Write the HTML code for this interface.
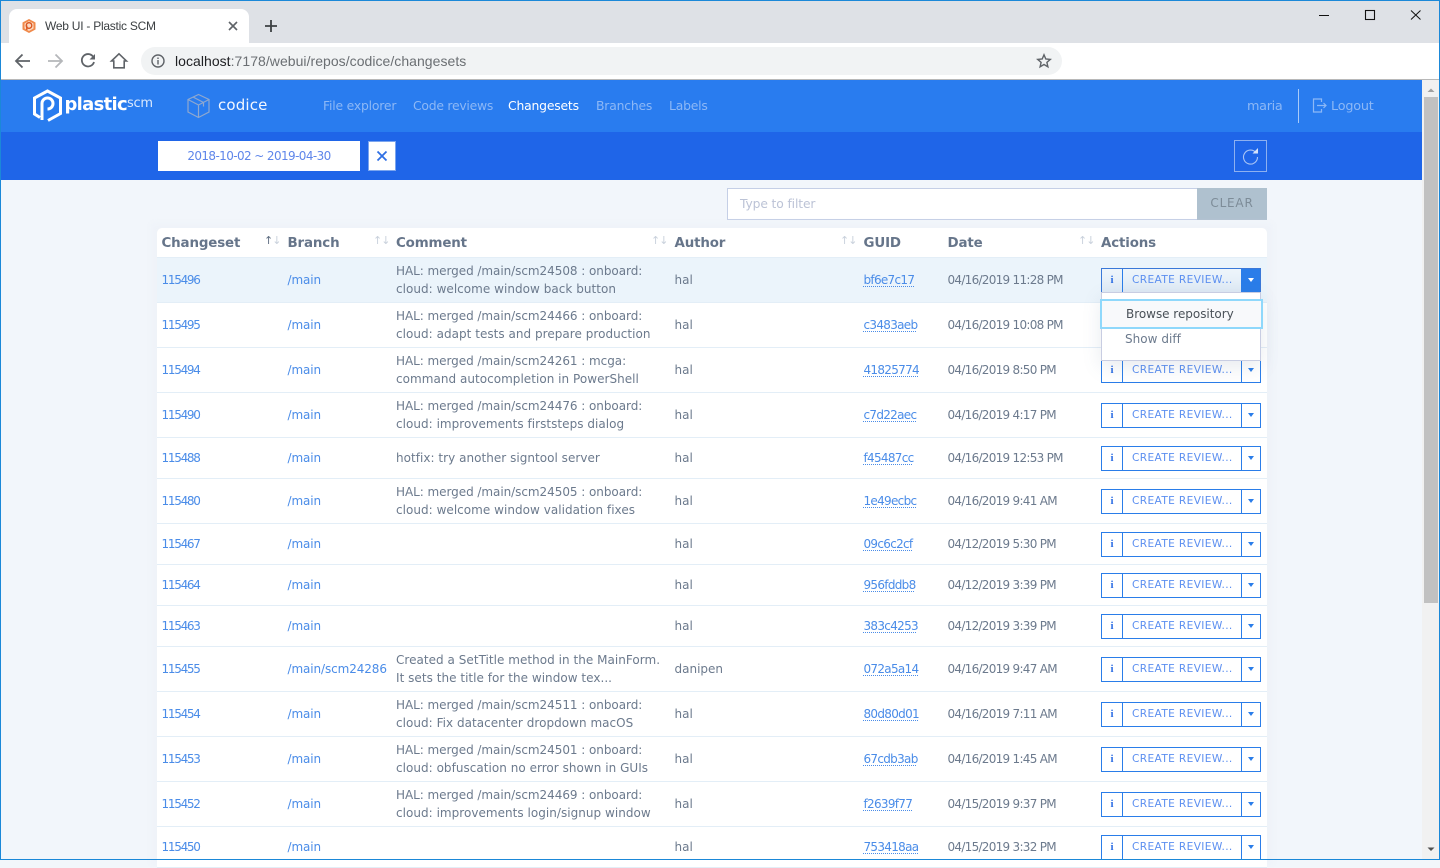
<!DOCTYPE html>
<html><head><meta charset="utf-8"><title>Web UI - Plastic SCM</title>
<style>
*{box-sizing:border-box}
html,body{margin:0;padding:0;width:1440px;height:860px;overflow:hidden;background:#f2f6fb;font-family:"DejaVu Sans","Liberation Sans",sans-serif;font-size:12px;color:#6c7a8d}
.abs,.r,.r>span,.r>div{position:absolute}
.chrome{font-family:"Liberation Sans",sans-serif}
.r{left:157px;width:1110px;background:#fff;border-bottom:1px solid #e3eef7}
.r>span,.r>div{top:0;height:100%;display:flex;align-items:center;white-space:nowrap}
.a{left:4.500px;color:#4a8ce8;letter-spacing:-1.280px}
.b{left:130.500px;color:#4a8ce8;letter-spacing:-.1px}
.c{left:239px;line-height:18px;letter-spacing:.03px;display:block!important;height:auto!important;top:50%!important;transform:translateY(-50%)}
.c b{font-weight:normal;letter-spacing:-.05px}
.d{left:517.500px}
.e{left:706.500px;color:#4a8ce8}
.e u{text-decoration:underline dotted 1px;text-underline-offset:2px;letter-spacing:-.7px}
.f{left:790.500px;letter-spacing:-.72px}
.g{left:944px;width:160px;align-items:center}
.btn{position:absolute;left:0;top:50%;margin-top:-12.500px;width:160px;height:25px;border:1.200px solid #2a7de9;background:#fff;display:flex;color:#5c8ff0;font-size:10.600px;line-height:22px;letter-spacing:.36px}
.i{width:21px;border-right:1.200px solid #2a7de9;text-align:center;font:bold 11px/22px "Liberation Serif",serif;color:#2f6fe4;letter-spacing:0}
.t{width:119px;padding-left:9px;border-right:1.200px solid #2a7de9;overflow:hidden;white-space:nowrap}
.k{flex:1;position:relative}
.k:after{content:"";position:absolute;left:6px;top:9px;border:3.500px solid transparent;border-top:4px solid #2a7de9;border-bottom:0}
.k.on{background:#2a7de9}
.k.on:after{border-top-color:#fff}
.h{position:absolute;top:1px;line-height:29px;font-weight:bold;font-size:13.400px;color:#66758a;letter-spacing:-.15px}
.s{position:absolute;top:7px;font-size:11px;line-height:12px;color:#c9d1dc;letter-spacing:-1px}
.n{position:absolute;top:80px;line-height:51px;font-size:12.400px;color:#8db8f6;white-space:nowrap;letter-spacing:-.2px}
</style></head><body>

<!-- browser chrome -->
<div class="abs" style="left:0;top:0;width:1440px;height:43px;background:#dee1e6"></div>
<div class="abs" style="left:9px;top:9px;width:240px;height:34px;background:#fff;border-radius:8px 8px 0 0"></div>
<div class="abs" style="left:0;top:43px;width:1440px;height:37px;background:#fff;border-bottom:1px solid #b8b8b8"></div>
<svg class="abs" style="left:21px;top:18px" width="16" height="16" viewBox="0 0 16 16"><path d="M8 1 14.500 4.500v7L8 15 1.500 11.500v-7z" fill="#f08a4b"/><path d="M8 3 12.500 5.500v5L8 13 3.500 10.500v-5z" fill="#fbd9c2"/><circle cx="8" cy="7.500" r="2.800" fill="none" stroke="#d9541e" stroke-width="1.300"/><path d="M5.800 7.500V12" stroke="#d9541e" stroke-width="1.300"/></svg>
<div class="abs chrome" style="left:45px;top:18px;font-size:12px;line-height:16px;color:#3c4043;letter-spacing:-.25px">Web UI - Plastic SCM</div>
<svg class="abs" style="left:228px;top:21px" width="10" height="10"><path d="M1 1 9 9M9 1 1 9" stroke="#5f6368" stroke-width="1.600"/></svg>
<svg class="abs" style="left:264px;top:19px" width="14" height="14"><path d="M7 1v12M1 7h12" stroke="#3c4043" stroke-width="1.800"/></svg>
<svg class="abs" style="left:1300px;top:0" width="140" height="30"><path d="M19 15.500H29" stroke="#111" stroke-width="1"/><rect x="65.500" y="10.500" width="9" height="9" fill="none" stroke="#111" stroke-width="1.100"/><path d="M111 10.500 120.500 19.500M120.500 10.500 111 19.500" stroke="#111" stroke-width="1"/></svg>
<svg class="abs" style="left:14px;top:52px" width="120" height="18" fill="none"><path d="M2 9H16M8.500 2.500 2 9l6.500 6.500" stroke="#5f6368" stroke-width="1.800"/><path d="M34 9H48M41.500 2.500 48 9l-6.500 6.500" stroke="#b5b7ba" stroke-width="1.800"/><path d="M79 4.500A6.200 6.200 0 1 0 80 10" stroke="#5f6368" stroke-width="1.800"/><path d="M75.500 7.500h5.500v-5.500z" fill="#5f6368"/><path d="M105 1.800 97.500 9h2.300v6.800h10.400V9h2.300z" stroke="#5f6368" stroke-width="1.600"/></svg>
<div class="abs" style="left:141px;top:47px;width:921px;height:28px;background:#f1f3f4;border-radius:14px"></div>
<svg class="abs" style="left:151px;top:54px" width="14" height="14" fill="none"><circle cx="7" cy="7" r="6" stroke="#5f6368" stroke-width="1.400"/><path d="M7 6v4.500M7 3.500v1.500" stroke="#5f6368" stroke-width="1.400"/></svg>
<div class="abs chrome" style="left:175px;top:52px;font-size:14px;line-height:18px;color:#6b6f73;white-space:nowrap;letter-spacing:.04px"><span style="color:#202124">localhost</span>:7178/webui/repos/codice/changesets</div>
<svg class="abs" style="left:1036px;top:53px" width="16" height="16" fill="none"><path d="M8 1.800 9.800 6l4.500.4-3.400 3 1 4.400L8 11.500l-3.900 2.300 1-4.400-3.400-3L6.200 6z" stroke="#5f6368" stroke-width="1.400"/></svg>

<!-- app header -->
<div class="abs" style="left:0;top:80px;width:1422px;height:52px;background:#297cef"></div>
<div class="abs" style="left:0;top:132px;width:1422px;height:48px;background:#1f65e8"></div>
<svg class="abs" style="left:31px;top:88px" width="32" height="36" fill="none" stroke="#fff" stroke-width="3"><path d="M9 29.500 3.500 26V10L16.500 3l13 7v15.500L17 32.500"/><path d="M11 32V15.500a5.500 5.500 0 1 1 5.500 5.500" stroke-width="3"/></svg>
<div class="abs" style="left:64.500px;top:91px;font-size:18px;line-height:28px;font-weight:bold;color:#fff;letter-spacing:-.7px">plastic</div>
<div class="abs" style="left:127px;top:96px;font-size:13px;line-height:16px;color:#d9e8fd;letter-spacing:-.3px">scm</div>
<svg class="abs" style="left:186px;top:93px" width="25" height="26" fill="none" stroke="#8fa8cf" stroke-width="1.200"><path d="M12.500 1.500 23 6.500v12.500l-10.500 5.500L2 19V6.500zM2 6.500l10.500 5.500L23 6.500M12.500 12v12.500M7 4l10.500 5.500v4"/></svg>
<div class="abs" style="left:218px;top:80px;line-height:51px;font-size:15px;color:#f2f7ff;letter-spacing:.15px">codice</div>
<div class="n" style="left:323px">File explorer</div>
<div class="n" style="left:413px;letter-spacing:-.25px">Code reviews</div>
<div class="n" style="left:508px;color:#fff">Changesets</div>
<div class="n" style="left:596px">Branches</div>
<div class="n" style="left:669px">Labels</div>
<div class="n" style="left:1247px;top:81px;font-size:12.800px;line-height:51px;letter-spacing:-.3px">maria</div>
<div class="abs" style="left:1298px;top:89px;width:1px;height:34px;background:#a9cbf8"></div>
<svg class="abs" style="left:1312px;top:98px" width="15" height="15" fill="none" stroke="#8db8f6" stroke-width="1.200"><path d="M9.500 4V1H1.500v13h8v-3M5 7.500h9M11.500 5l2.500 2.500L11.500 10"/></svg>
<div class="n" style="left:1331px;top:81px;font-size:12.800px;line-height:51px">Logout</div>

<div class="abs" style="left:158px;top:141px;width:202px;height:30px;background:#fff;line-height:30px;text-align:center;color:#5f86ea;font-size:12px;letter-spacing:-.6px">2018-10-02 ~ 2019-04-30</div>
<div class="abs" style="left:368px;top:141px;width:28px;height:30px;background:#fff;border:1px solid #7ba5ee"></div>
<svg class="abs" style="left:376px;top:150px" width="12" height="12"><path d="M1.500 1.500 10.500 10.500M10.500 1.500 1.500 10.500" stroke="#2f6fe4" stroke-width="1.800"/></svg>
<div class="abs" style="left:1234px;top:140px;width:33px;height:32px;border:1px solid #8eb0f0"></div>
<svg class="abs" style="left:1241px;top:147px" width="19" height="18" fill="none"><path d="M14.800 5.500A7 7 0 1 0 16.500 10" stroke="#a9c4f5" stroke-width="1.100"/><path d="M11.500 6.500h5.500V1z" fill="#d5e2fa"/></svg>

<!-- filter -->
<div class="abs" style="left:727px;top:188px;width:471px;height:32px;background:#fff;border:1px solid #c5cfe6;line-height:30px;padding-left:12px;color:#bcc3d6;font-size:12.300px;letter-spacing:-.12px">Type to filter</div>
<div class="abs" style="left:1197px;top:188px;width:70px;height:32px;background:#afc1cf;line-height:31px;text-align:center;color:#7d8c98;font-size:12px;letter-spacing:.8px">CLEAR</div>

<!-- table shadow + header -->
<div class="abs" style="left:152px;top:224px;width:1120px;height:640px;background:#eef2f8;filter:blur(3px)"></div>
<div class="abs" style="left:157px;top:228px;width:1110px;height:30px;background:#fff;border-radius:5px 5px 0 0;border-bottom:1px solid #e3eef7">
<div class="h" style="left:4.500px">Changeset</div><div class="s" style="left:107px"><span style="color:#5f6e82">↑</span>↓</div>
<div class="h" style="left:130.500px">Branch</div><div class="s" style="left:216px">↑↓</div>
<div class="h" style="left:239px">Comment</div><div class="s" style="left:494px">↑↓</div>
<div class="h" style="left:517.500px">Author</div><div class="s" style="left:683px">↑↓</div>
<div class="h" style="left:706.500px">GUID</div>
<div class="h" style="left:790.500px">Date</div><div class="s" style="left:921px">↑↓</div>
<div class="h" style="left:944px">Actions</div>
</div>

<!-- rows -->
<div class="r" style="top:258px;height:45px;background:#ebf4fb"><span class="a">115496</span><span class="b">/main</span><div class="c"><b>HAL: merged /main/scm24508 : onboard:</b><br>cloud: welcome window back button</div><span class="d">hal</span><span class="e"><u>bf6e7c17</u></span><span class="f">04/16/2019 11:28 PM</span><div class="g"><div class="btn" style="background:linear-gradient(#eef5fb,#dfeaf5);border-color:#3a78d8"><div class="i">i</div><div class="t">CREATE REVIEW...</div><div class="k on"></div></div></div></div>
<div class="r" style="top:303px;height:45px"><span class="a">115495</span><span class="b">/main</span><div class="c"><b>HAL: merged /main/scm24466 : onboard:</b><br>cloud: adapt tests and prepare production</div><span class="d">hal</span><span class="e"><u>c3483aeb</u></span><span class="f">04/16/2019 10:08 PM</span><div class="g"><div class="btn"><div class="i">i</div><div class="t">CREATE REVIEW...</div><div class="k"></div></div></div></div>
<div class="r" style="top:348px;height:45px"><span class="a">115494</span><span class="b">/main</span><div class="c"><b>HAL: merged /main/scm24261 : mcga:</b><br>command autocompletion in PowerShell</div><span class="d">hal</span><span class="e"><u>41825774</u></span><span class="f">04/16/2019 8:50 PM</span><div class="g"><div class="btn"><div class="i">i</div><div class="t">CREATE REVIEW...</div><div class="k"></div></div></div></div>
<div class="r" style="top:393px;height:45px"><span class="a">115490</span><span class="b">/main</span><div class="c"><b>HAL: merged /main/scm24476 : onboard:</b><br>cloud: improvements firststeps dialog</div><span class="d">hal</span><span class="e"><u>c7d22aec</u></span><span class="f">04/16/2019 4:17 PM</span><div class="g"><div class="btn"><div class="i">i</div><div class="t">CREATE REVIEW...</div><div class="k"></div></div></div></div>
<div class="r" style="top:438px;height:41px"><span class="a">115488</span><span class="b">/main</span><div class="c">hotfix: try another signtool server</div><span class="d">hal</span><span class="e"><u>f45487cc</u></span><span class="f">04/16/2019 12:53 PM</span><div class="g"><div class="btn"><div class="i">i</div><div class="t">CREATE REVIEW...</div><div class="k"></div></div></div></div>
<div class="r" style="top:479px;height:45px"><span class="a">115480</span><span class="b">/main</span><div class="c"><b>HAL: merged /main/scm24505 : onboard:</b><br>cloud: welcome window validation fixes</div><span class="d">hal</span><span class="e"><u>1e49ecbc</u></span><span class="f">04/16/2019 9:41 AM</span><div class="g"><div class="btn"><div class="i">i</div><div class="t">CREATE REVIEW...</div><div class="k"></div></div></div></div>
<div class="r" style="top:524px;height:41px"><span class="a">115467</span><span class="b">/main</span><span class="d">hal</span><span class="e"><u>09c6c2cf</u></span><span class="f">04/12/2019 5:30 PM</span><div class="g"><div class="btn"><div class="i">i</div><div class="t">CREATE REVIEW...</div><div class="k"></div></div></div></div>
<div class="r" style="top:565px;height:41px"><span class="a">115464</span><span class="b">/main</span><span class="d">hal</span><span class="e"><u>956fddb8</u></span><span class="f">04/12/2019 3:39 PM</span><div class="g"><div class="btn"><div class="i">i</div><div class="t">CREATE REVIEW...</div><div class="k"></div></div></div></div>
<div class="r" style="top:606px;height:41px"><span class="a">115463</span><span class="b">/main</span><span class="d">hal</span><span class="e"><u>383c4253</u></span><span class="f">04/12/2019 3:39 PM</span><div class="g"><div class="btn"><div class="i">i</div><div class="t">CREATE REVIEW...</div><div class="k"></div></div></div></div>
<div class="r" style="top:647px;height:45px"><span class="a">115455</span><span class="b">/main/scm24286</span><div class="c">Created a SetTitle method in the MainForm.<br>It sets the title for the window tex...</div><span class="d">danipen</span><span class="e"><u>072a5a14</u></span><span class="f">04/16/2019 9:47 AM</span><div class="g"><div class="btn"><div class="i">i</div><div class="t">CREATE REVIEW...</div><div class="k"></div></div></div></div>
<div class="r" style="top:692px;height:45px"><span class="a">115454</span><span class="b">/main</span><div class="c"><b>HAL: merged /main/scm24511 : onboard:</b><br>cloud: Fix datacenter dropdown macOS</div><span class="d">hal</span><span class="e"><u>80d80d01</u></span><span class="f">04/16/2019 7:11 AM</span><div class="g"><div class="btn"><div class="i">i</div><div class="t">CREATE REVIEW...</div><div class="k"></div></div></div></div>
<div class="r" style="top:737px;height:45px"><span class="a">115453</span><span class="b">/main</span><div class="c"><b>HAL: merged /main/scm24501 : onboard:</b><br>cloud: obfuscation no error shown in GUIs</div><span class="d">hal</span><span class="e"><u>67cdb3ab</u></span><span class="f">04/16/2019 1:45 AM</span><div class="g"><div class="btn"><div class="i">i</div><div class="t">CREATE REVIEW...</div><div class="k"></div></div></div></div>
<div class="r" style="top:782px;height:45px"><span class="a">115452</span><span class="b">/main</span><div class="c"><b>HAL: merged /main/scm24469 : onboard:</b><br>cloud: improvements login/signup window</div><span class="d">hal</span><span class="e"><u>f2639f77</u></span><span class="f">04/15/2019 9:37 PM</span><div class="g"><div class="btn"><div class="i">i</div><div class="t">CREATE REVIEW...</div><div class="k"></div></div></div></div>
<div class="r" style="top:827px;height:41px"><span class="a">115450</span><span class="b">/main</span><span class="d">hal</span><span class="e"><u>753418aa</u></span><span class="f">04/15/2019 3:32 PM</span><div class="g"><div class="btn"><div class="i">i</div><div class="t">CREATE REVIEW...</div><div class="k"></div></div></div></div>

<!-- dropdown -->
<div class="abs" style="left:1101px;top:292px;width:160px;height:69px;background:#fff;border:1px solid #c8cde2;box-shadow:0 6px 18px rgba(90,110,140,.14)"></div>
<div class="abs" style="left:1100px;top:299px;width:163px;height:30px;background:#f8f9fb;border:2px solid #8fd8fb;line-height:26px;padding-left:24px;color:#4a5158;font-size:12px;letter-spacing:-.03px">Browse repository</div>
<div class="abs" style="left:1125px;top:330px;line-height:18px;color:#6c7a8d;font-size:12px;letter-spacing:.03px">Show diff</div>

<!-- scrollbar -->
<div class="abs" style="left:1422px;top:80px;width:18px;height:780px;background:#f1f1f1"></div>
<div class="abs" style="left:1424px;top:97px;width:14px;height:506px;background:#c1c1c1"></div>
<svg class="abs" style="left:1423px;top:84px" width="16" height="776"><path d="M4.500 8 8 4.500 11.500 8z" fill="#a0a0a0"/><path d="M4.500 763.500H11.500L8 767z" fill="#505050"/></svg>

<!-- window border -->
<div class="abs" style="left:0;top:0;width:1440px;height:860px;border:1px solid #1b88d8;pointer-events:none"></div>
</body></html>
